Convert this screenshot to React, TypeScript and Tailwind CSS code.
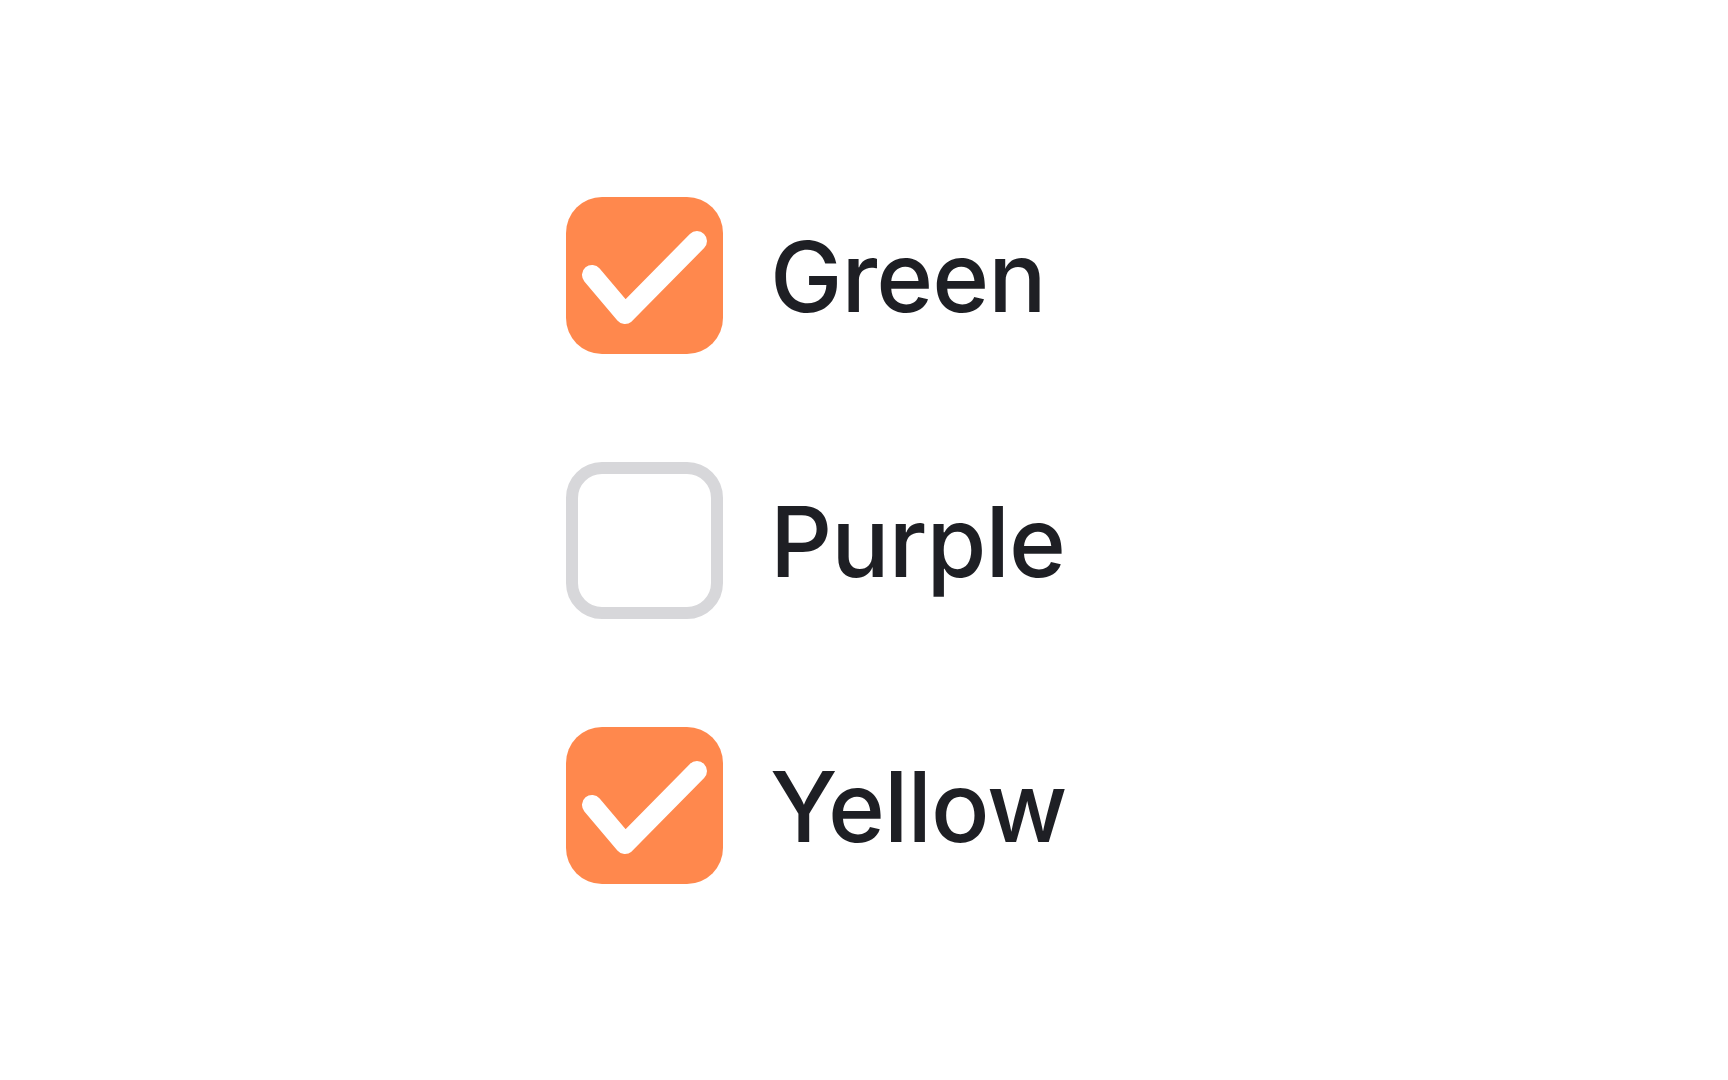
import React, { useState } from 'react';

type Item = { label: string; checked: boolean };

const initial: Item[] = [
  { label: 'Green', checked: true },
  { label: 'Purple', checked: false },
  { label: 'Yellow', checked: true },
];

function Box({ checked }: { checked: boolean }) {
  if (checked) {
    return (
      <span className="w-[157px] h-[157px] shrink-0 rounded-[36px] bg-[#ff884d] flex items-center justify-center">
        <svg viewBox="0 0 157 157" className="w-[157px] h-[157px]" fill="none" stroke="#ffffff" strokeWidth="20" strokeLinecap="round" strokeLinejoin="round">
          <path d="M26 78 L59 117 L131 44" />
        </svg>
      </span>
    );
  }
  return <span className="w-[157px] h-[157px] shrink-0 rounded-[36px] border-[12px] border-[#d7d7da] bg-white" />;
}

export default function App() {
  const [items, setItems] = useState(initial);

  return (
    <div className="w-full h-[1080px] bg-white flex flex-col justify-center pl-[566px] gap-[108px] font-['Inter',sans-serif]">
      {items.map((it, i) => (
        <button
          key={it.label}
          onClick={() => setItems(items.map((x, j) => (j === i ? { ...x, checked: !x.checked } : x)))}
          className="flex items-center gap-[47px] text-left"
        >
          <Box checked={it.checked} />
          <span className="text-[97px] leading-none font-medium tracking-[-0.01em] text-[#1e1f24] pt-[3px]">{it.label}</span>
        </button>
      ))}
    </div>
  );
}
